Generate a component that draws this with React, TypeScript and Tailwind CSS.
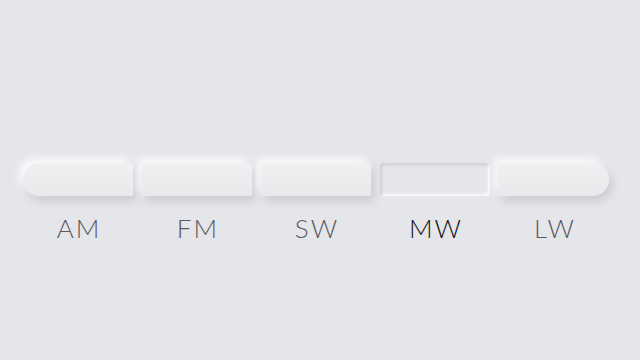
const bands = [
  { label: "AM", shape: "rounded-l-full rounded-r-[3px]" },
  { label: "FM", shape: "rounded-[3px]" },
  { label: "SW", shape: "rounded-[3px]" },
  { label: "MW", shape: "rounded-[3px]", active: true },
  { label: "LW", shape: "rounded-r-full rounded-l-[3px]" },
];

export default function App() {
  return (
    <div className="h-[360px] w-[640px] overflow-hidden bg-[#e5e6ea] pl-[23px] pt-[163px] font-['Lato',sans-serif]">
      <div className="flex gap-[9px]">
        {bands.map((b) => (
          <div key={b.label} className="flex w-[110px] flex-col items-center">
            <button
              type="button"
              className={
                "h-[33px] w-full " +
                b.shape +
                (b.active
                  ? " bg-[#e5e6e9] shadow-[inset_2px_2px_3px_rgba(160,163,175,0.35),inset_-2px_-2px_3px_rgba(255,255,255,0.85)]"
                  : " bg-[linear-gradient(180deg,#f0f0f3,#e9e9ec)] shadow-[3px_5px_8px_rgba(160,163,175,0.4),-4px_-4px_8px_rgba(255,255,255,0.95)]")
              }
            />
            <span
              className={
                "mt-[15px] pl-[2px] text-[26px] font-light leading-[34px] tracking-[2px] " +
                (b.active ? "text-[#141414]" : "text-[#5b5b5e]")
              }
            >
              {b.label}
            </span>
          </div>
        ))}
      </div>
    </div>
  );
}
